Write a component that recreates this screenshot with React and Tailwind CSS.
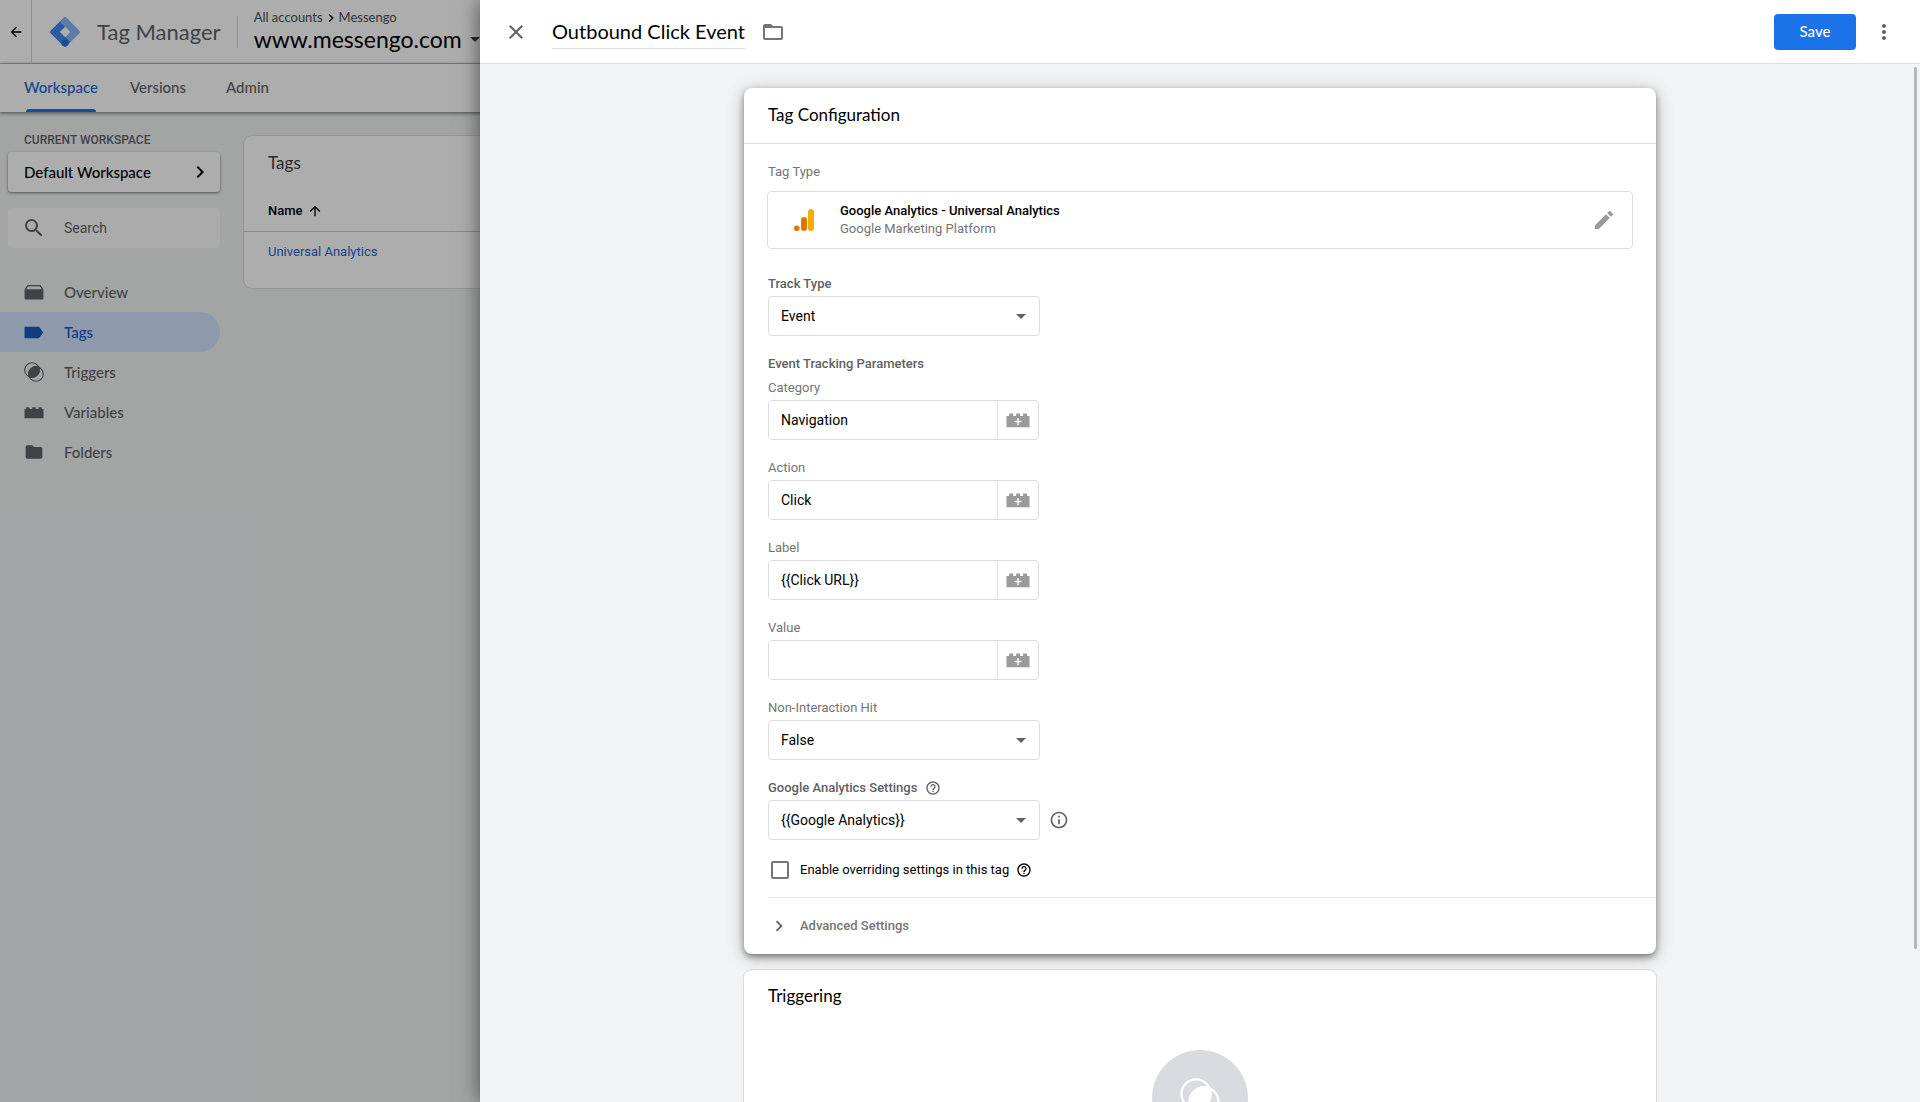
import { useState } from "react";
import { MdArrowBack, MdArrowUpward, MdChevronRight, MdClose, MdEdit, MdFolder, MdFolderOpen, MdHelpOutline, MdInfoOutline, MdMoreVert, MdSearch } from "react-icons/md";

function TagManagerLogo() {
  return (
    <svg viewBox="0 0 30 30" className="h-[30px] w-[30px]">
      <path d="M13.2 1.2 1 13.2a2.5 2.5 0 0 0 0 3.6l12.2 12a2.5 2.5 0 0 0 3.6 0l3.6-3.7L10.3 15 20.4 5l-3.6-3.8a2.5 2.5 0 0 0-3.6 0Z" fill="#4285f4" />
      <path d="M13.2 1.2a2.5 2.5 0 0 1 3.6 0l12.2 12a2.5 2.5 0 0 1 0 3.6l-8.6 8.4-5.3-5.2 4.8-5-9.8-10Z" fill="#8ab4f8" />
      <path d="m6 18.600 9 9 5.400-2.500L10.300 15Z" fill="#4285f4" />
      <circle cx="15" cy="26" r="3.500" fill="#246fdb" />
      <path d="m15 9.900 5.100 5.100-5.100 5.100L9.900 15Z" fill="#fff" />
    </svg>
  );
}

function AnalyticsLogo() {
  return (
    <svg viewBox="0 0 20 22" className="h-[22px] w-5">
      <rect x="14" y="0" width="6" height="22" rx="3" fill="#f9ab00" />
      <rect x="7" y="8" width="6" height="14" rx="3" fill="#e37400" />
      <circle cx="2.800" cy="19.200" r="2.800" fill="#e37400" />
    </svg>
  );
}

function OverviewIcon() {
  return (
    <svg viewBox="0 0 20 20" className="h-5 w-5" fill="currentColor">
      <path d="M3.600 3h12.800l3 4.300V16.500a1 1 0 0 1-1 1H1.600a1 1 0 0 1-1-1V7.300Zm.7 1.200L2.300 7.300h15.400l-2-3.100Z" />
    </svg>
  );
}

function TagIcon() {
  return (
    <svg viewBox="0 0 20 20" className="h-5 w-5" fill="currentColor">
      <path d="M.500 5.500a.8.8 0 0 1 .8-.8h12.900c.5 0 1 .2 1.300.6l3.700 5.200-3.700 5.100c-.3.400-.8.700-1.300.7H1.300a.8.8 0 0 1-.8-.8Z" />
    </svg>
  );
}

function TriggerIcon({ className = "h-5 w-5" }) {
  return (
    <svg viewBox="0 0 20 20" className={className} fill="none" stroke="currentColor" strokeWidth="1.100">
      <circle cx="8" cy="8" r="7.300" />
      <circle cx="12" cy="12" r="7.300" />
      <path d="M14.760 5.240a7.300 7.300 0 0 1-9.520 9.520 7.300 7.300 0 0 1 9.520-9.520Z" fill="currentColor" />
    </svg>
  );
}

function BrickIcon() {
  return (
    <svg viewBox="0 0 20 20" className="h-5 w-5" fill="currentColor">
      <path d="M.500 7h1.700V5.200h3.300V7h2.800V5.200h3.400V7h2.800V5.200h3.300V7h1.700v9.200H.500Z" />
    </svg>
  );
}

function BrickPlusIcon() {
  return (
    <svg viewBox="0 0 24 16" className="h-4 w-6">
      <path d="M.500 4h2.700V1.500h4V4h2.900V1.500h4V4H17V1.500h4V4h2.500v11.300H.500Z" fill="#9a9a9a" />
      <path d="M12 6v7M8.500 9.500h7" stroke="#fff" strokeWidth="1.400" />
    </svg>
  );
}

const navItems = [
  { label: "Overview", icon: <OverviewIcon /> },
  { label: "Tags", icon: <TagIcon />, active: true },
  { label: "Triggers", icon: <TriggerIcon /> },
  { label: "Variables", icon: <BrickIcon /> },
  { label: "Folders", icon: <MdFolder size={20} /> },
];

function AppHeader() {
  return (
    <header className="flex h-16 items-center border-b border-[#c4c7cb] bg-white">
      <button aria-label="Back" className="flex h-full w-8 items-center justify-center border-r border-[#d0d2d5] text-black">
        <MdArrowBack size={16} />
      </button>
      <div className="ml-[18px] flex items-center gap-[17px]">
        <TagManagerLogo />
        <span className="text-[22px] text-[#5f6368]">Tag Manager</span>
      </div>
      <div className="ml-4 h-8 w-px bg-[#d0d2d5]" />
      <div className="ml-4 flex flex-col pb-1">
        <div className="flex h-5 items-center text-[13px] text-[#4a4d51]">
          All accounts
          <MdChevronRight size={16} className="text-black" />
          Messengo
        </div>
        <button className="flex h-6 items-center gap-2 text-[23px] whitespace-nowrap text-black">
          www.messengo.com
          <span className="border-x-[5px] border-t-[5px] border-x-transparent border-t-[#3c4043]" />
        </button>
      </div>
    </header>
  );
}

function TopTabs() {
  return (
    <nav className="flex h-12 items-stretch gap-8 bg-white px-6 text-[15px] font-medium text-[#5f6368] shadow-[0_1px_4px_rgba(0,0,0,0.6)]">
      <a href="#workspace" className="flex flex-col text-[#1967d2]">
        <span className="flex flex-1 items-center pt-0.5">Workspace</span>
        <span className="mx-0.5 h-[3px] rounded-t-sm bg-[#1a73e8]" />
      </a>
      <a href="#versions" className="flex items-center pb-px">Versions</a>
      <a href="#admin" className="ml-2 flex items-center pb-px">Admin</a>
    </nav>
  );
}

function Sidebar() {
  return (
    <aside className="w-[220px] shrink-0">
      <p className="mt-[18px] mb-0.5 px-6 font-[Roboto] text-xs leading-5 font-medium text-[#5f6368]">CURRENT WORKSPACE</p>
      <button className="ml-2 flex h-10 w-[212px] items-center justify-between rounded bg-white pr-2 pl-4 text-[15px] font-medium text-black shadow-[0_1px_3px_rgba(0,0,0,0.5)]">
        Default Workspace
        <MdChevronRight size={24} />
      </button>
      <label className="mt-4 ml-2 flex h-10 items-center gap-[18px] rounded bg-[#fcfcfd] pl-3.5">
        <MdSearch size={24} className="shrink-0 text-[#5f6368]" />
        <input placeholder="Search" className="min-w-0 flex-1 bg-transparent font-[Roboto] text-sm outline-none placeholder:text-[#5f6368]" />
      </label>
      <nav className="mt-6">
        {navItems.map((item) => (
          <a
            key={item.label}
            href={`#${item.label.toLowerCase()}`}
            className={`flex h-10 items-center gap-5 rounded-r-full pl-6 text-[15px] font-medium ${
              item.active ? "bg-[#d2e3fc] text-[#185abc]" : "text-[#5f6368]"
            }`}
          >
            {item.icon}
            {item.label}
          </a>
        ))}
      </nav>
    </aside>
  );
}

function TagsTable() {
  return (
    <section className="mt-6 ml-6 flex-1 self-start rounded-lg bg-white ring-1 ring-[#dadce0]">
      <h2 className="px-6 pt-[15px] text-[17px] leading-6 text-[#3c4043]">Tags</h2>
      <table className="mt-4 mb-[17px] w-full text-left font-[Roboto] text-[13px]">
        <thead>
          <tr className="h-10 border-b border-[#c4c7cb]">
            <th className="px-6 font-medium text-black">
              <span className="flex items-center gap-1">
                Name <MdArrowUpward size={16} />
              </span>
            </th>
          </tr>
        </thead>
        <tbody>
          <tr className="h-10">
            <td className="px-6">
              <a href="#universal-analytics" className="text-[#1967d2]">Universal Analytics</a>
            </td>
          </tr>
        </tbody>
      </table>
    </section>
  );
}

function SelectField({ id, label, options, strong, help, children }) {
  return (
    <div>
      <div className="mb-0.5 flex h-5 items-center gap-2 text-[#757575]">
        <label htmlFor={id} className={strong ? "text-[13px] font-medium text-[#616161]" : "text-[13px]"}>
          {label}
        </label>
        {help && <MdHelpOutline size={16} className="text-[#616161]" />}
      </div>
      <div className="flex items-center gap-[9px]">
        <div className="relative w-[272px]">
          <select id={id} className="h-10 w-full appearance-none rounded border border-[#dadce0] bg-white px-3 text-sm text-black">
            {options.map((option) => (
              <option key={option}>{option}</option>
            ))}
          </select>
          <span className="pointer-events-none absolute top-[18px] right-[14px] border-x-[5px] border-t-[5px] border-x-transparent border-t-[#616161]" />
        </div>
        {children}
      </div>
    </div>
  );
}

function VariableField({ id, label, value, onChange }) {
  return (
    <div>
      <label htmlFor={id} className="mb-0.5 block text-[13px] leading-5 text-[#757575]">{label}</label>
      <div className="flex h-10 w-[271px] rounded border border-[#dadce0]">
        <input id={id} value={value} onChange={onChange} className="min-w-0 flex-1 rounded-l bg-white px-3 text-sm text-black outline-none" />
        <button aria-label={`Insert variable for ${label}`} className="flex w-[41px] items-center justify-center border-l border-[#dadce0]">
          <BrickPlusIcon />
        </button>
      </div>
    </div>
  );
}

function TagConfiguration() {
  const [params, setParams] = useState({ Category: "Navigation", Action: "Click", Label: "{{Click URL}}", Value: "" });
  const [override, setOverride] = useState(false);

  return (
    <section className="relative rounded-lg bg-white font-[Roboto] shadow-[0_3px_6px_rgba(0,0,0,0.4),0_3px_18px_rgba(0,0,0,0.24)]">
      <h2 className="flex h-14 items-center border-b border-[#dadce0] px-6 pb-0.5 font-[Lato] text-[17px] text-black">Tag Configuration</h2>
      <div className="px-6 pt-[18px]">
        <p className="text-[13px] leading-5 text-[#757575]">Tag Type</p>
        <div className="mt-[10px] flex h-14 items-center rounded pr-4 pl-[26px] ring-1 ring-[#dadce0]">
          <AnalyticsLogo />
          <div className="ml-[26px] flex-1 text-[13px] leading-[18px]">
            <p className="font-medium text-black">Google Analytics - Universal Analytics</p>
            <p className="text-[#757575]">Google Marketing Platform</p>
          </div>
          <button aria-label="Edit tag type" className="text-[#9a9a9a]">
            <MdEdit size={24} />
          </button>
        </div>

        <div className="mt-[26px] flex flex-col gap-[18px]">
          <SelectField id="track-type" label="Track Type" options={["Event", "Page View", "Transaction"]} strong />
          <div className="flex flex-col gap-1">
            <h3 className="text-[13px] leading-5 font-medium text-[#616161]">Event Tracking Parameters</h3>
            <div className="flex flex-col gap-[18px]">
              {Object.keys(params).map((name) => (
                <VariableField
                  key={name}
                  id={name.toLowerCase()}
                  label={name}
                  value={params[name]}
                  onChange={(e) => setParams({ ...params, [name]: e.target.value })}
                />
              ))}
            </div>
          </div>
          <SelectField id="non-interaction" label="Non-Interaction Hit" options={["False", "True"]} />
          <SelectField id="ga-settings" label="Google Analytics Settings" options={["{{Google Analytics}}"]} strong help>
            <MdInfoOutline size={20} className="text-[#616161]" />
          </SelectField>
        </div>

        <div className="mt-5 flex items-center gap-[11px] pb-[17px] pl-[3px] text-[13px] leading-5 text-black">
          <input
            id="override"
            type="checkbox"
            checked={override}
            onChange={(e) => setOverride(e.target.checked)}
            className="h-[18px] w-[18px] appearance-none rounded-xs border-2 border-[#757575] bg-white checked:bg-[#1a73e8]"
          />
          <label htmlFor="override">Enable overriding settings in this tag</label>
          <MdHelpOutline size={16} className="-ml-1" />
        </div>
      </div>
      <div className="ml-6 border-t border-[#e4e5e7]">
        <button className="flex h-14 items-center gap-[10px] text-[13px] font-medium text-[#757575]">
          <MdChevronRight size={22} className="text-[#5f6368]" />
          Advanced Settings
        </button>
      </div>
    </section>
  );
}

function Triggering() {
  return (
    <section className="mt-4 h-72 rounded-lg bg-white ring-1 ring-[#dadce0]">
      <h2 className="px-6 pt-3.5 text-[17px] leading-6 text-black">Triggering</h2>
      <div className="mx-auto mt-[42px] flex h-24 w-24 items-center justify-center rounded-full bg-[#dadbde] text-white">
        <TriggerIcon className="h-10 w-10" />
      </div>
    </section>
  );
}

function TagDrawer() {
  return (
    <div className="absolute inset-y-0 right-0 flex w-3/4 flex-col bg-[#f1f3f4] shadow-[0_0_20px_rgba(0,0,0,0.55)]">
      <header className="flex h-16 shrink-0 items-center border-b border-[#dadce0] bg-white pr-6 pl-6">
        <button aria-label="Close" className="text-[#5f6368]">
          <MdClose size={24} />
        </button>
        <h1 className="ml-6 border-b border-[#dadce0] text-xl leading-[34px] text-black">Outbound Click Event</h1>
        <button aria-label="Move to folder" className="ml-4 text-[#757575]">
          <MdFolderOpen size={24} />
        </button>
        <button className="ml-auto h-9 w-[82px] rounded bg-[#1a73e8] text-[15px] font-medium text-white">Save</button>
        <button aria-label="More actions" className="ml-4 text-[#5f6368]">
          <MdMoreVert size={24} />
        </button>
      </header>
      <div className="relative flex-1 overflow-hidden">
        <main className="mx-auto mt-6 w-[912px]">
          <TagConfiguration />
          <Triggering />
        </main>
        <div className="absolute top-[3px] right-[3px] h-[85%] w-[3px] rounded-full bg-[#b4b6b9]" />
      </div>
    </div>
  );
}

export default function App() {
  return (
    <div className="relative h-screen overflow-hidden bg-[#f1f3f4] font-[Lato,sans-serif]">
      <AppHeader />
      <TopTabs />
      <div className="flex">
        <Sidebar />
        <TagsTable />
      </div>
      {/* dims the workspace while the drawer is open */}
      <div className="absolute inset-0 bg-black/32" />
      <TagDrawer />
    </div>
  );
}
